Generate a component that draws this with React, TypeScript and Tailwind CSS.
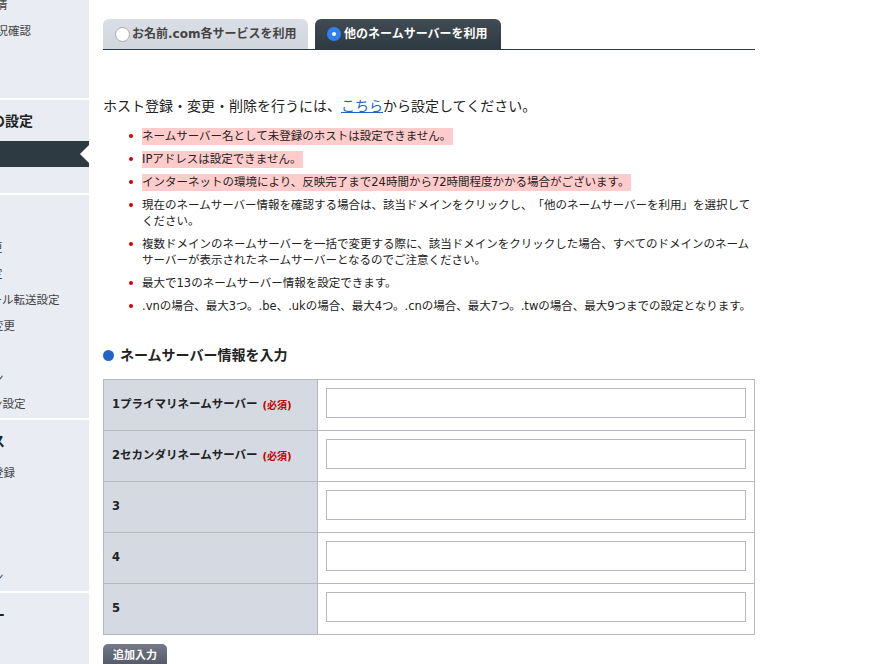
const font = "[font-family:'DejaVu_Sans','Noto_Sans_CJK_JP',sans-serif] [text-spacing-trim:space-all]"

const SideRow = ({ text, offset = "ml-0" }: { text?: string; offset?: string }) => (
    <div className="h-[26px] flex items-center overflow-hidden whitespace-nowrap text-[11.5px] text-[#444]">
        <span className={offset}>{text}</span>
    </div>
)

const SideHead = ({ text, offset }: { text: string; offset: string }) => (
    <div className="flex items-center overflow-hidden whitespace-nowrap text-[14px] font-bold text-[#222]">
        <span className={offset}>{text}</span>
    </div>
)

const Sidebar = () => (
    <aside className="w-[89px] shrink-0 h-[664px] overflow-hidden flex flex-col bg-white">
        <div className="h-[105px] bg-[#e9edf3] -mt-[7px] shrink-0">
            <SideRow text="情" offset="-ml-[4px]" />
            <SideRow text="状況確認" offset="-ml-[15px]" />
        </div>
        <div className="h-[93px] mt-[2px] bg-[#e9edf3] shrink-0 pt-[11px]">
            <SideHead text="の設定" offset="-ml-[9px]" />
            <div className="mt-[9px] h-[26px] bg-[#2e3a42] relative">
                <div className="absolute right-0 top-[4px] w-0 h-0 border-y-[9px] border-y-transparent border-r-[9px] border-r-white" />
            </div>
        </div>
        <div className="h-[223px] mt-[2px] bg-[#e9edf3] shrink-0 pt-[41px]">
            <SideRow text="更" offset="-ml-[9px]" />
            <SideRow text="定" offset="-ml-[9px]" />
            <SideRow text="メール転送設定" offset="-ml-[21px]" />
            <SideRow text="変更" offset="-ml-[8px]" />
            <SideRow />
            <SideRow text="ン" offset="-ml-[8px]" />
            <SideRow text="ン設定" offset="-ml-[9px]" />
        </div>
        <div className="h-[171px] mt-[2px] bg-[#e9edf3] shrink-0 pt-[11px]">
            <SideHead text="ス" offset="-ml-[9px]" />
            <div className="mt-[9px]">
                <SideRow text="登録" offset="-ml-[8px]" />
                <SideRow />
                <SideRow />
                <SideRow />
                <SideRow text="ン" offset="-ml-[8px]" />
            </div>
        </div>
        <div className="flex-1 mt-[2px] bg-[#e9edf3] pt-[12px]">
            <SideHead text="ー" offset="-ml-[9px]" />
        </div>
    </aside>
)

const notes = [
    { text: "ネームサーバー名として未登録のホストは設定できません。", alert: true },
    { text: "IPアドレスは設定できません。", alert: true },
    { text: "インターネットの環境により、反映完了まで24時間から72時間程度かかる場合がございます。", alert: true },
    { text: "現在のネームサーバー情報を確認する場合は、該当ドメインをクリックし、「他のネームサーバーを利用」を選択してください。" },
    { text: "複数ドメインのネームサーバーを一括で変更する際に、該当ドメインをクリックした場合、すべてのドメインのネームサーバーが表示されたネームサーバーとなるのでご注意ください。" },
    { text: "最大で13のネームサーバー情報を設定できます。" },
    { text: ".vnの場合、最大3つ。.be、.ukの場合、最大4つ。.cnの場合、最大7つ。.twの場合、最大9つまでの設定となります。" },
]

const rows = [
    { label: "1プライマリネームサーバー", required: true },
    { label: "2セカンダリネームサーバー", required: true },
    { label: "3" },
    { label: "4" },
    { label: "5" },
]

const App = () => {
    return (
        <div className={`w-[888px] h-[664px] overflow-hidden flex bg-white ${font}`}>
            <Sidebar />
            <main className="w-[652px] ml-[14px] pt-[19px]">
                <div className="flex gap-[7px] h-[31px] border-b border-[#2e3a42]">
                    <div className="w-[205px] h-[30px] rounded-t-[6px] bg-gradient-to-b from-[#dadee5] to-[#d2d7df] flex items-center pl-[12px] gap-[2px] text-[12px] font-bold text-[#444]">
                        <span className="w-[15px] h-[15px] rounded-full bg-white border border-[#aaa]" />
                        お名前.com各サービスを利用
                    </div>
                    <div className="w-[186px] h-[30px] rounded-t-[6px] bg-gradient-to-b from-[#414b53] to-[#2e3a42] flex items-center pl-[12px] gap-[3px] text-[12px] font-bold text-white">
                        <span className="w-[14px] h-[14px] rounded-full bg-[#2f80f2] flex items-center justify-center">
                            <span className="w-[4px] h-[4px] rounded-full bg-white" />
                        </span>
                        他のネームサーバーを利用
                    </div>
                </div>
                <p className="mt-[46px] text-[14px] leading-[20px] text-[#222]">
                    ホスト登録・変更・削除を行うには、<a className="text-[#2563c9] underline">こちら</a>から設定してください。
                </p>
                <ul className="mt-[12px] pl-[39px] flex flex-col gap-[7px] text-[11.5px] leading-[16px] text-[#222]">
                    {notes.map((n) => (
                        <li key={n.text} className={n.alert ? "relative h-[16px]" : "relative"}>
                            <span className="absolute -left-[13px] top-[6px] w-[4px] h-[4px] rounded-full bg-[#d40000]" />
                            {n.alert ? (
                                <span className="absolute left-0 top-0 whitespace-nowrap bg-[#ffcccc] pr-[2px] leading-[17px]">{n.text}</span>
                            ) : n.text}
                        </li>
                    ))}
                </ul>
                <h2 className="mt-[31px] flex items-center gap-[6px] text-[14px] font-bold leading-[20px] text-[#222]">
                    <span className="w-[11px] h-[11px] rounded-full bg-[#2563c9]" />
                    ネームサーバー情報を入力
                </h2>
                <div className="mt-[14px] border-t border-l border-[#b5b8bd]">
                    {rows.map((r) => (
                        <div key={r.label} className="flex h-[51px] border-b border-r border-[#b5b8bd]">
                            <div className="w-[214px] shrink-0 bg-[#d5dae2] border-r border-[#b5b8bd] flex items-center pl-[8px] gap-[5px] text-[11.5px] font-bold text-[#222]">
                                {r.label}
                                {r.required && <span className="text-[10px] text-[#c00000]">(必須)</span>}
                            </div>
                            <div className="flex-1 flex items-start pt-[8px] px-[8px]">
                                <input className="w-full h-[30px] border border-[#b5b8bd] bg-white" />
                            </div>
                        </div>
                    ))}
                </div>
                <button className="mt-[9px] w-[64px] h-[24px] rounded-[5px] bg-gradient-to-b from-[#747a87] to-[#4f5563] text-[11px] font-bold text-white">追加入力</button>
            </main>
        </div>
    )
}

export default App
